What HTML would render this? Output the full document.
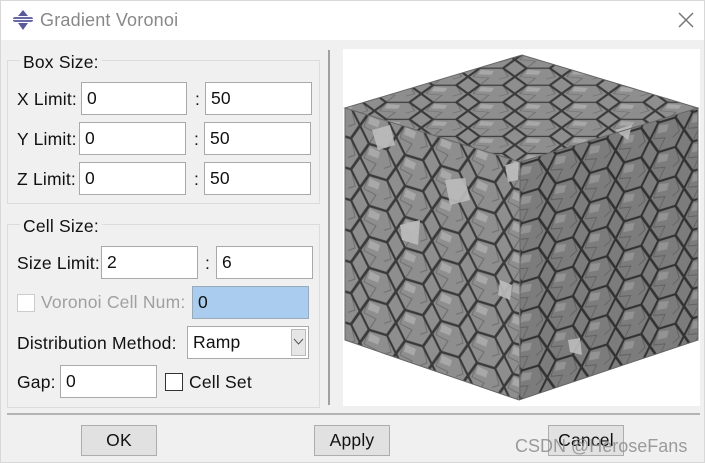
<!DOCTYPE html>
<html><head><meta charset="utf-8">
<style>
*{box-sizing:border-box;margin:0;padding:0}
body{width:705px;height:463px;overflow:hidden;background:#f0f0f0;font-family:"Liberation Sans","Noto Sans CJK SC",sans-serif;font-size:17.5px;letter-spacing:0.2px;color:#111;position:relative}
.abs{position:absolute}
.title{left:0;top:0;width:705px;height:40px;background:#fff;border:1px solid #d8d8d8;border-bottom:none}
.grp{border:1px solid #dcdcdc;background:#f0f0f0}
.glab{background:#f0f0f0;padding:0 3px;line-height:18px}
.inp{background:#fff;border:1px solid #a9a9a9;padding-left:5px;line-height:30px;height:33px}
.lab{line-height:20px}
.btn{background:#e1e1e1;border:1px solid #adadad;text-align:center;line-height:29px;height:31px}
.cb{width:18px;height:18px;border:1px solid #333;background:#fff}
</style></head><body>
<div class="abs title"></div>
<svg class="abs" style="left:12px;top:10px" width="22" height="20" viewBox="0 0 22 20">
<path d="M11 0 L16 6 L6 6 Z M11 20 L16 13 L6 13 Z" fill="#5a5a9a"/>
<rect x="1" y="7" width="20" height="5" rx="2" fill="#6a6aa8"/>
<rect x="1" y="9" width="20" height="1" fill="#fff"/>
</svg>
<div class="abs" style="left:40px;top:10px;color:#888;font-size:18px;line-height:20px">Gradient Voronoi</div>
<svg class="abs" style="left:678px;top:12px" width="16" height="16"><path d="M1 1L15 15M15 1L1 15" stroke="#777" stroke-width="1.5"/></svg>

<div class="abs grp" style="left:7px;top:60px;width:313px;height:144px"></div>
<div class="abs glab" style="left:20px;top:53px">Box Size:</div>
<div class="abs lab" style="left:17px;top:89px">X Limit:</div>
<div class="abs inp" style="left:81px;top:82px;width:106px">0</div>
<div class="abs lab" style="left:195px;top:89px">:</div>
<div class="abs inp" style="left:205px;top:82px;width:107px">50</div>
<div class="abs lab" style="left:17px;top:129px">Y Limit:</div>
<div class="abs inp" style="left:79px;top:122px;width:107px">0</div>
<div class="abs lab" style="left:194px;top:129px">:</div>
<div class="abs inp" style="left:204px;top:122px;width:107px">50</div>
<div class="abs lab" style="left:17px;top:169px">Z Limit:</div>
<div class="abs inp" style="left:79px;top:162px;width:107px">0</div>
<div class="abs lab" style="left:194px;top:169px">:</div>
<div class="abs inp" style="left:204px;top:162px;width:107px">50</div>

<div class="abs grp" style="left:7px;top:224px;width:313px;height:184px"></div>
<div class="abs glab" style="left:20px;top:217px">Cell Size:</div>
<div class="abs lab" style="left:17px;top:253px">Size Limit:</div>
<div class="abs inp" style="left:101px;top:246px;width:97px">2</div>
<div class="abs lab" style="left:205px;top:253px">:</div>
<div class="abs inp" style="left:216px;top:246px;width:97px">6</div>
<div class="abs cb" style="left:17px;top:294px;border-color:#ccc"></div>
<div class="abs lab" style="left:41px;top:292px;color:#a0a0a0">Voronoi Cell Num:</div>
<div class="abs inp" style="left:192px;top:286px;width:117px;background:#aaccee;border-color:#9ab">0</div>
<div class="abs lab" style="left:17px;top:333px">Distribution Method:</div>
<div class="abs inp" style="left:187px;top:326px;width:122px">Ramp</div>
<div class="abs" style="left:291px;top:329px;width:15px;height:27px;background:#e6e6e6;border:1px solid #bbb"></div>
<svg class="abs" style="left:293px;top:338px" width="11" height="8"><path d="M1 1L5.5 6L10 1" stroke="#555" fill="none"/></svg>
<div class="abs lab" style="left:17px;top:372px">Gap:</div>
<div class="abs inp" style="left:60px;top:365px;width:97px">0</div>
<div class="abs cb" style="left:165px;top:373px"></div>
<div class="abs lab" style="left:189px;top:372px">Cell Set</div>

<div class="abs" style="left:328px;top:50px;width:2px;height:355px;background:#a0a0a0"></div>
<div class="abs" style="left:343px;top:49px;width:357px;height:357px;background:#fff"></div>
<svg class="abs" style="left:0;top:0" width="705" height="463">
<defs>
<pattern id="hx" width="36" height="31" patternUnits="userSpaceOnUse">
<rect width="36" height="31" fill="#8e8e8e"/>
<path d="M9 0L4 15.5L16 18L9 31M27 0L31 15.5L24 20" fill="none" stroke="#6e6e6e" stroke-width="1"/>
<path d="M10 3L20 5L18 12L8 11Z" fill="#a8a8a8"/>
<path d="M0 15.5L9 0H27L36 15.5L27 31H9Z" fill="none" stroke="#3a3a3a" stroke-width="2.4"/>
</pattern>
<pattern id="hx2" href="#hx" patternTransform="scale(0.95) skewY(-17)"/>
<pattern id="hxl" href="#hx" patternTransform="scale(1) skewY(17)"/>
<pattern id="hxt" href="#hx" patternTransform="scale(1.3,0.55)"/>
</defs>
<polygon points="345,108 520,162 519,400 345,340" fill="url(#hxl)"/>
<polygon points="520,162 698,108 698,340 519,400" fill="url(#hx2)"/>
<polygon points="520,162 698,108 698,340 519,400" fill="#000" opacity="0.12"/>
<polygon points="345,108 522,55 698,108 520,162" fill="url(#hxt)"/>
<g fill="#bdbdbd" opacity="0.9">
<polygon points="372,130 390,125 395,145 378,150"/>
<polygon points="445,180 465,178 470,200 450,205"/>
<polygon points="400,225 420,220 418,245 402,240"/>
<polygon points="505,165 518,162 518,180 508,182"/>
<polygon points="500,280 512,285 510,300 498,295"/>
<polygon points="615,130 632,125 628,140"/>
<polygon points="568,340 580,338 582,355 570,352"/>
</g>
<g stroke="#666" stroke-width="1" fill="none">
<polygon points="345,108 522,55 698,108 520,162"/>
<path d="M520 162V400M345 108V340L519 400L698 340V108"/>
</g>
</svg>

<div class="abs" style="left:7px;top:413px;width:693px;height:2px;background:#b4b4b4"></div>
<div class="abs btn" style="left:81px;top:425px;width:76px">OK</div>
<div class="abs btn" style="left:314px;top:425px;width:76px">Apply</div>
<div class="abs btn" style="left:548px;top:425px;width:76px">Cancel</div>
<div class="abs" style="left:515px;top:435px;font-size:18px;letter-spacing:0;color:rgba(140,140,140,0.85);line-height:22px">CSDN @HeroseFans</div>
<div class="abs" style="left:704px;top:0;width:1px;height:463px;background:#d8d8d8"></div>
<div class="abs" style="left:0;top:0;width:1px;height:463px;background:#d8d8d8"></div>
<div class="abs" style="left:0;top:462px;width:705px;height:1px;background:#d8d8d8"></div>
</body></html>
